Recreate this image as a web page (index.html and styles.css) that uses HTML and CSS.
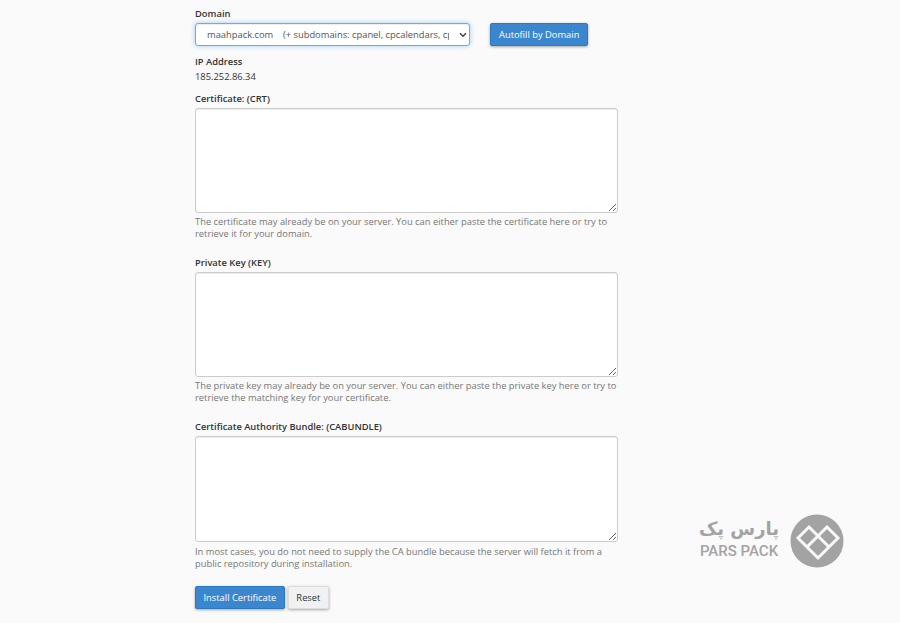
FILE: index.html
```html
<!DOCTYPE html>
<html lang="en">
<head>
<meta charset="utf-8">
<title>Install an SSL Certificate</title>
<link rel="stylesheet" href="styles.css">
</head>
<body>
<main class="form">
  <div class="domain-row">
    <div class="domain-field">
      <label class="label" for="domain">Domain</label>
      <div class="select-wrap">
        <select id="domain" class="select">
          <option>maahpack.com &nbsp;&nbsp;&nbsp;(+ subdomains: cpanel, cpcalendars, cpcontacts, mail, webdisk, webmail, www)</option>
        </select>
        <svg class="chevron" width="8" height="6" viewBox="0 0 8 6" aria-hidden="true"><path d="M1 1.200 L4 4.200 L7 1.200" fill="none" stroke="#444" stroke-width="1.500"/></svg>
      </div>
    </div>
    <button class="btn btn-primary autofill" type="button">Autofill by Domain</button>
  </div>
  <div class="ip">
    <div class="label label-tight">IP Address</div>
    <div class="ip-value">185.252.86.34</div>
  </div>
  <div class="group">
    <label class="label" for="crt">Certificate: (CRT)</label>
    <textarea id="crt" class="area"></textarea>
    <p class="help">The certificate may already be on your server. You can either paste the certificate here or try to retrieve it for your domain.</p>
  </div>
  <div class="group">
    <label class="label" for="key">Private Key (KEY)</label>
    <textarea id="key" class="area"></textarea>
    <p class="help">The private key may already be on your server. You can either paste the private key here or try to retrieve the matching key for your certificate.</p>
  </div>
  <div class="group">
    <label class="label" for="ca">Certificate Authority Bundle: (CABUNDLE)</label>
    <textarea id="ca" class="area area-tall"></textarea>
    <p class="help help-low">In most cases, you do not need to supply the CA bundle because the server will fetch it from a public repository during installation.</p>
  </div>
  <div class="actions">
    <button class="btn btn-primary" type="button">Install Certificate</button>
    <button class="btn btn-default" type="button">Reset</button>
  </div>
</main>
<div class="logo">
  <div class="logo-text">
    <span class="logo-fa" lang="fa" dir="rtl">پارس پک</span>
    <span class="logo-en">PARS PACK</span>
  </div>
  <svg class="logo-mark" width="54" height="54" viewBox="0 0 54 54" aria-hidden="true">
    <circle cx="27" cy="27" r="26.500" fill="#a3a3a3"/>
    <path d="M28 22 L19 13 L8 24 L28 44 L48 24 L37 13 Z M28 22 L17 33 M28 22 L39 33" fill="none" stroke="#fafafa" stroke-width="3"/>
  </svg>
</div>
</body>
</html>
```
FILE: styles.css
```css
* { box-sizing: border-box; }
html, body { margin: 0; height: 623px; overflow: hidden; }
body {
  position: relative;
  background: #fafafa;
  color: #333;
  font-family: "Open Sans", sans-serif;
  font-size: 9.35px;
  line-height: 15px;
}
.form { width: 423px; margin-left: 195px; padding-top: 6px; }
.label { display: block; font-weight: 600; color: #333; margin-bottom: 3px; height: 14px; line-height: 15px; }
.label-tight { margin-bottom: 1px; }
.domain-row { display: flex; align-items: flex-end; gap: 20px; width: 500px; }
.domain-field { width: 275px; }
.select-wrap { position: relative; }
.select {
  display: block;
  width: 275px;
  height: 23px;
  padding: 0 20px 0 11px;
  border: 1px solid #66afe9;
  border-radius: 3px;
  background: #fff;
  color: #555;
  font: 9.35px "Open Sans", sans-serif;
  box-shadow: inset 0 1px 1px rgba(0,0,0,.075), 0 0 5px rgba(102,175,233,.6);
  outline: 0;
  appearance: none;
}
.chevron { position: absolute; right: 3px; top: 9px; pointer-events: none; }
.btn {
  height: 23px;
  padding: 0 7.5px;
  border-radius: 2px;
  font: 9.35px "Open Sans", sans-serif;
  cursor: pointer;
}
.autofill { padding: 0 8px; }
.btn-primary {
  background: #3a87cf;
  border: 1px solid #2e78bc;
  color: #fff;
  box-shadow: 0 1px 3px rgba(0,0,0,.35);
}
.btn-default {
  background: #f1f1f1;
  border: 1px solid #ddd;
  color: #333;
  box-shadow: 0 1px 3px rgba(0,0,0,.35);
}
.ip { margin-top: 8px; }
.ip-value { height: 15px; color: #333; }
.group { margin-top: 7px; }
.group + .group { margin-top: 15px; }
.area {
  display: block;
  width: 423px;
  height: 105px;
  border: 1px solid #ccc;
  border-radius: 3px;
  background: #fff;
  resize: vertical;
  box-shadow: inset 0 1px 1px rgba(0,0,0,.075);
}
.area-tall { height: 106px; }
.help { margin: 3px 0 0; color: #777; line-height: 12px; }
.help-low { margin-top: 4px; }
.actions { display: flex; gap: 3px; margin-top: 16px; }
.logo {
  position: absolute;
  left: 698px;
  top: 514px;
  display: flex;
  align-items: flex-start;
  gap: 10px;
}
.logo-text { display: flex; flex-direction: column; align-items: center; width: 82px; color: #a3a3a3; }
.logo-fa { font: 700 18px/29px "DejaVu Sans", sans-serif; }
.logo-en { font: 500 15px/16px Roboto, sans-serif; }
.logo-mark { flex: none; }
```
